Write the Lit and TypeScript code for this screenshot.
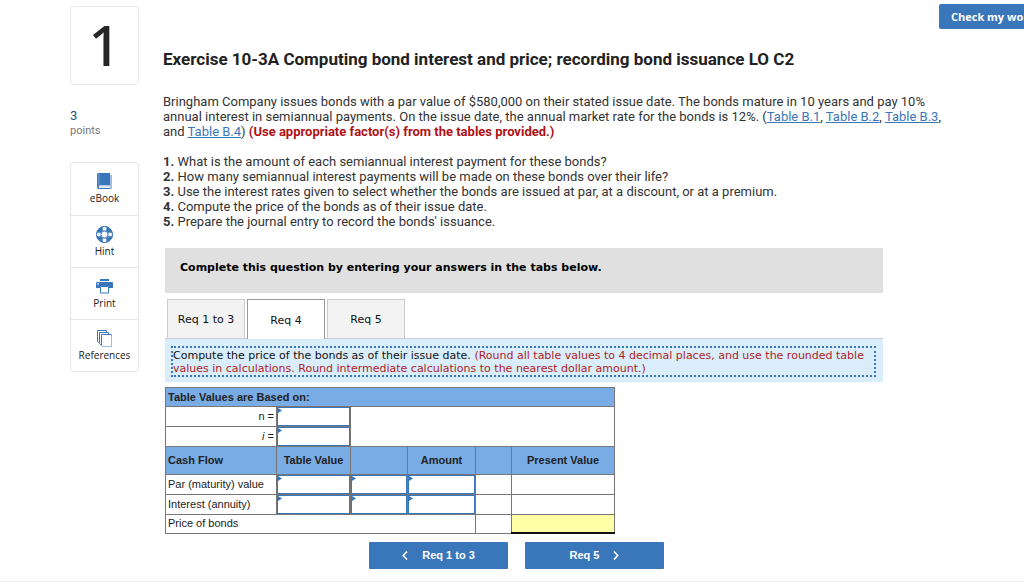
import { LitElement, html, css, svg } from "lit";
import { customElement, state } from "lit/decorators.js";
import { classMap } from "lit/directives/class-map.js";

const BLUE = "#3a76ba";
const PALE = "#a3bfe0";

const icons = {
  book: svg`<path fill=${PALE} d="M14 2h2v14h-2z"/><path fill=${BLUE} d="M2.500 0H14v12.500H3.200v.8H14v.8H3.200v.9H14V16H2.500Q1 15.500 1 14V1.500Q1 0 2.500 0Z"/><path fill="#fff" d="M3.200 12.800H14V15H3.200Q2.300 13.900 3.200 12.800Z"/><path fill=${PALE} d="M3.500 13.600H14v.7H3.500zM2.600 1h.6v11h-.6z"/>`,
  ring: svg`<circle cx="8.500" cy="8.500" r="5.700" fill="none" stroke=${BLUE} stroke-width="5.200"/><g stroke="#fff" stroke-width="3.600"><path d="M8.500 1.100v3.500M8.500 12.400v3.500M1.100 8.500h3.500M12.400 8.500h3.500"/></g><circle cx="8.500" cy="8.500" r="8" fill="none" stroke=${BLUE} stroke-width="1"/><circle cx="8.500" cy="8.500" r="3.400" fill="#fff" stroke=${BLUE} stroke-width=".8"/>`,
  printer: svg`<path fill=${BLUE} d="M4 1h9v2H4zM1 4h15q1 0 1 1v5h-4V8H4v2H0V5q0-1 1-1z"/><path fill="#fff" d="M1.300 5h1.500v1.500H1.300z"/><path fill="#fff" stroke=${BLUE} stroke-width="1" d="M4.500 8.500h8V15h-8z"/>`,
  pages: svg`<g fill="#fff" stroke=${BLUE} stroke-width="1"><path d="M1.500.5h9v12h-8l-1-1z"/><path d="M3.500 2.500h9v12h-8l-1-1z"/><path d="M5.500 4.500h10v12h-9l-1-1z"/></g><path fill="none" stroke=${PALE} stroke-width="1" d="M15.500 5v11.500h-9"/>`,
};

const tools = [
  { label: "eBook", icon: icons.book },
  { label: "Hint", icon: icons.ring },
  { label: "Print", icon: icons.printer },
  { label: "References", icon: icons.pages },
];

@customElement("worksheet-table")
class WorksheetTable extends LitElement {
  static styles = css`
    :host { display: block; font: 11px/13px "Liberation Sans", Arial, sans-serif; color: #222; }
    table { border-collapse: collapse; table-layout: fixed; width: 450px; max-width: 100%; }
    .c1 { width: 111px; } .c2 { width: 74px; } .c3 { width: 57px; } .c4 { width: 68px; } .c5 { width: 36px; }
    th, td { border: 1px solid #777; padding: 0 2px; height: 18px; text-align: left; }
    .blue th { background: #79ace5; font-weight: bold; }
    .head th { height: 27px; text-align: center; }
    .head th:first-child { text-align: left; }
    .sum td { height: 17px; }
    td.right { text-align: right; }
    td.entry { position: relative; padding: 0; }
    td.entry::before {
      content: ""; position: absolute; left: 1px; top: 1px; width: 4px; height: 5px;
      background: #3a76ba; clip-path: polygon(0 0, 100% 50%, 0 100%);
    }
    input {
      display: block; box-sizing: border-box; width: 100%; height: 19px; margin: 0; padding: 0 6px;
      border: 1px solid #3a76ba; border-radius: 0; background: #fff; font: inherit; outline: 0;
    }
    .total { background: #ffffa6; border-bottom: 2px solid #111; }
    .light { border-left: 1px solid #bbb; }
  `;
  private entry(label: string) {
    return html`<td class="entry"><input type="text" aria-label=${label} /></td>`;
  }
  render() {
    return html`<table>
      <colgroup><col class="c1" /><col class="c2" /><col class="c3" /><col class="c4" /><col class="c5" /><col /></colgroup>
      <tbody>
        <tr class="blue"><th colspan="6">Table Values are Based on:</th></tr>
        <tr><td class="right">n =</td>${this.entry("n")}<td colspan="4" rowspan="2"></td></tr>
        <tr><td class="right"><i>i</i> =</td>${this.entry("i")}</tr>
        <tr class="blue head"><th>Cash Flow</th><th>Table Value</th><th></th><th>Amount</th><th></th><th>Present Value</th></tr>
        ${["Par (maturity) value", "Interest (annuity)"].map(
          (name) => html`<tr>
            <td>${name}</td>
            ${this.entry(name + " table value")}${this.entry(name + " operator")}${this.entry(name + " amount")}
            <td></td><td class="light"></td>
          </tr>`
        )}
        <tr class="sum"><td colspan="4">Price of bonds</td><td></td><td class="total"></td></tr>
      </tbody>
    </table>`;
  }
}

@customElement("app-root")
class AppRoot extends LitElement {
  @state() private active = 1;

  static styles = css`
    :host { display: block; overflow: hidden; background: #fff; color: #333; font: 13px/15px Roboto, Lato, sans-serif; }
    button { font: inherit; color: inherit; margin: 0; padding: 0; border: 0; background: none; cursor: pointer; }
    a { color: #3a76ba; text-decoration: underline; }
    .page { display: grid; grid-template-columns: 69px minmax(0, 1fr); column-gap: 24px; padding: 0 0 12px 70px; border-bottom: 1px solid #eee; }
    aside { padding-top: 6px; }
    .number {
      display: flex; align-items: center; justify-content: center; box-sizing: border-box; height: 79px;
      border: 1px solid #e9e9e9; border-radius: 4px; color: #262626; font: 500 56px/75px "Noto Sans", sans-serif;
      padding-bottom: 2px;
    }
    .points { padding: 23px 0 0; margin: 0 0 24px; font-size: 11px; line-height: 15px; color: #777; }
    .points b { display: block; font-weight: 400; font-size: 13px; color: #1f5087; }
    .tools { border: 1px solid #e6e6e6; border-radius: 4px; }
    .tool {
      display: flex; flex-direction: column; align-items: center; width: 100%; height: 52px; padding-top: 10px;
      color: #222; font: 10px/12px "Open Sans", sans-serif;
    }
    .tool + .tool { border-top: 1px solid #e6e6e6; }
    .tool svg { width: 17px; height: 17px; margin-bottom: 2px; flex: none; }
    .top { display: flex; justify-content: flex-end; padding-top: 4px; margin-right: -32px; }
    .check { height: 25px; width: 117px; border-radius: 2px; background: #3a76ba; color: #fff; font: bold 11px/25px "Open Sans", sans-serif; white-space: nowrap; text-align: left; padding-left: 12px; }
    h1 { margin: 20px 0 24px; font-size: 17px; line-height: 21px; font-weight: 700; color: #222; }
    p { margin: 0 0 15px; }
    p strong { color: #b01116; }
    ol { list-style: none; margin: 0 0 19px; padding: 0; }
    .work { margin: 0 141px 0 2px; }
    .banner { padding: 12px 15px 18px; background: #e0e0e0; color: #000; font: bold 11px/15px "DejaVu Sans", Verdana, sans-serif; }
    .tabs { display: flex; gap: 2px; padding: 6px 2px 0; border-bottom: 1px solid #ccc; }
    .tab {
      box-sizing: border-box; width: 78px; height: 39px; padding-top: 2px; border: 1px solid #ccc; border-bottom: 0; background: #f3f3f3;
      color: #111; font: 11px/36px "DejaVu Sans", Verdana, sans-serif;
    }
    .tab.on { background: #fff; border-color: #999; margin-bottom: -1px; height: 40px; }
    .note { padding: 7px 7px 5px 6px; margin-bottom: 5px; background: #d9edfb; }
    .note div { border: 2px dotted #3a76ba; padding: 1px 0 0; color: #111; font: 11px/13px "DejaVu Sans", Verdana, sans-serif; }
    .note em { font-style: normal; color: #b01c24; }
    .nav { display: flex; justify-content: center; gap: 17px; padding: 8px 15px 0 0; }
    .nav button {
      display: flex; align-items: center; justify-content: center; gap: 14px; width: 139px; height: 27px;
      border-radius: 1px; background: #3a76ba; color: #fff; font: bold 11px/27px "Liberation Sans", Arial, sans-serif;
    }
    .nav svg { width: 6px; height: 9px; }
  `;

  render() {
    const tabs = ["Req 1 to 3", "Req 4", "Req 5"];
    const asks = [
      "What is the amount of each semiannual interest payment for these bonds?",
      "How many semiannual interest payments will be made on these bonds over their life?",
      "Use the interest rates given to select whether the bonds are issued at par, at a discount, or at a premium.",
      "Compute the price of the bonds as of their issue date.",
      "Prepare the journal entry to record the bonds' issuance.",
    ];
    return html`<div class="page">
      <aside>
        <div class="number">1</div>
        <div class="points"><b>3</b>points</div>
        <nav class="tools">
          ${tools.map((t) => html`<button class="tool"><svg viewBox="0 0 17 17">${t.icon}</svg>${t.label}</button>`)}
        </nav>
      </aside>
      <main>
        <div class="top"><button class="check">Check my work</button></div>
        <h1>Exercise 10-3A Computing bond interest and price; recording bond issuance LO C2</h1>
        <p>
          Bringham Company issues bonds with a par value of $580,000 on their stated issue date. The bonds mature in 10 years and pay 10%<br />
          annual interest in semiannual payments. On the issue date, the annual market rate for the bonds is 12%. (<a href="#b1">Table B.1</a>,
          <a href="#b2">Table B.2</a>, <a href="#b3">Table B.3</a>,<br />
          and <a href="#b4">Table B.4</a>) <strong>(Use appropriate factor(s) from the tables provided.)</strong>
        </p>
        <ol>${asks.map((a, i) => html`<li><b>${i + 1}.</b> ${a}</li>`)}</ol>
        <section class="work">
          <div class="banner">Complete this question by entering your answers in the tabs below.</div>
          <div class="tabs" role="tablist">
            ${tabs.map((t, i) => html`<button role="tab" aria-selected=${i === this.active} class=${classMap({ tab: true, on: i === this.active })} @click=${() => (this.active = i)}>${t}</button>`)}
          </div>
          <div class="note"><div>
            Compute the price of the bonds as of their issue date. <em>(Round all table values to 4 decimal places, and use the rounded table
            values in calculations. Round intermediate calculations to the nearest dollar amount.)</em>
          </div></div>
          <worksheet-table></worksheet-table>
          <div class="nav">
            <button><svg viewBox="0 0 6 9" fill="none" stroke="#fff" stroke-width="1.6"><path d="M5 .5 1.300 4.500 5 8.500" /></svg>Req 1 to 3</button>
            <button>Req 5<svg viewBox="0 0 6 9" fill="none" stroke="#fff" stroke-width="1.6"><path d="M1 .5 4.700 4.500 1 8.500" /></svg></button>
          </div>
        </section>
      </main>
    </div>`;
  }
}
